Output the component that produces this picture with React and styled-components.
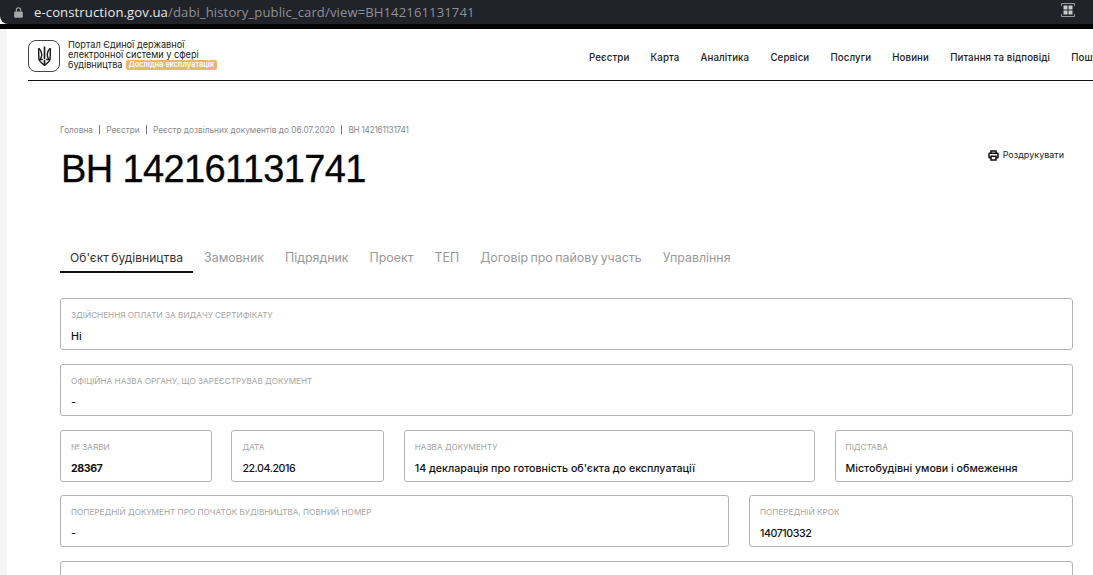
import React from 'react';
import styled, { createGlobalStyle } from 'styled-components';

const GlobalStyle = createGlobalStyle`
  html, body {
    margin: 0;
    padding: 0;
    height: 575px;
    overflow: hidden;
    background: #fff;
    font-family: Inter, "Noto Sans", sans-serif;
  }
  * { box-sizing: border-box; }
`;

const Chrome = styled.div`
  height: 24px;
  background: #202329;
  border-bottom-left-radius: 8px;
  display: flex;
  align-items: center;
  padding: 0 18px 0 14px;
`;

const ChromeShadow = styled.div`
  height: 5px;
  background: #050505;
`;

const Address = styled.div`
  flex: 1;
  margin-left: 11px;
  font-family: "Open Sans", sans-serif;
  font-size: 13.1px;
  color: #8d9196;
  letter-spacing: 0.1px;
  white-space: nowrap;
  b { font-weight: 400; color: #e6e8ea; }
`;

const Page = styled.div`
  margin-left: 7px;
  padding-left: 21px;
  height: 546px;
  overflow: hidden;
  background: #fff;
  box-shadow: -7px 0 0 #f5f5f5;
`;

const Header = styled.header`
  height: 52px;
  border-bottom: 1px solid #111;
  display: flex;
  align-items: flex-start;
  padding-top: 11px;
  white-space: nowrap;
`;

const LogoBox = styled.div`
  width: 32px;
  height: 32px;
  flex-shrink: 0;
  border: 1px solid #444;
  border-radius: 8px;
  display: flex;
  align-items: center;
  justify-content: center;
`;

const Brand = styled.div`
  margin-left: 8px;
  flex-shrink: 0;
  font-size: 9.2px;
  line-height: 10px;
  color: #222;
`;

const Badge = styled.span`
  display: inline-block;
  margin-left: 3px;
  padding: 0 3px;
  height: 10px;
  background: #eeb65f;
  border-radius: 2px;
  color: #fff;
  font-size: 7.4px;
  font-weight: 600;
  line-height: 10px;
  vertical-align: top;
`;

const Nav = styled.nav`
  margin-left: 372px;
  flex-shrink: 0;
  padding-top: 12px;
  display: flex;
  gap: 21.2px;
  font-size: 9.7px;
  line-height: 12px;
  color: #222;
  letter-spacing: 0.1px;
  font-weight: 500;
`;

const Main = styled.main`
  padding: 0 20px 0 32px;
`;

const Crumbs = styled.div`
  margin-top: 43px;
  display: flex;
  align-items: center;
  height: 11px;
  font-size: 8.25px;
  color: #8a8a8a;
  white-space: nowrap;
`;

const Crumb = styled.span`
  letter-spacing: ${({ $code }) => ($code ? '-0.25px' : '0')};
`;

const CrumbSep = styled.span`
  width: 1px;
  height: 9px;
  background: #777;
  margin: 0 6.2px;
`;

const TitleRow = styled.div`
  display: flex;
  justify-content: space-between;
  align-items: flex-start;
`;

const Title = styled.h1`
  margin: 11px 0 0 1px;
  font-size: 38px;
  line-height: 46px;
  font-weight: 400;
  color: #050505;
  font-family: "Liberation Sans", Arial, sans-serif;
  letter-spacing: -0.62px;
  -webkit-text-stroke: 0.3px #050505;
`;

const PrintButton = styled.div`
  margin: 14px 9px 0 0;
  display: flex;
  align-items: center;
  gap: 4px;
  font-size: 9px;
  line-height: 12px;
  color: #222;
  font-weight: 400;
`;

const Tabs = styled.div`
  margin-top: 51px;
  display: flex;
  gap: 1px;
  white-space: nowrap;
`;

const Tab = styled.div`
  padding: 0 10px;
  height: 30px;
  font-size: ${({ $active }) => ($active ? '12.1px' : '12.4px')};
  line-height: 29px;
  word-spacing: -1px;
  color: ${({ $active }) => ($active ? '#333' : '#999')};
  border-bottom: 2px solid ${({ $active }) => ($active ? '#111' : 'transparent')};
`;

const Fields = styled.div`
  margin-top: 25px;
  display: flex;
  flex-direction: column;
  gap: 14px;
`;

const Row = styled.div`
  display: grid;
  grid-template-columns: ${({ $cols }) => $cols || '1fr'};
  column-gap: ${({ $gap }) => $gap || '20px'};
  margin-top: ${({ $tight }) => ($tight ? '-1px' : '0')};
`;

const Field = styled.div`
  height: 52px;
  border: 1px solid #b4b4b4;
  border-radius: 3px;
  padding: 11px 10px 0;
  min-width: 0;
`;

const Label = styled.div`
  font-size: 8.2px;
  line-height: 10px;
  color: #a5a5a5;
  white-space: nowrap;
`;

const Value = styled.div`
  margin-top: 10px;
  font-size: 10.65px;
  line-height: 13px;
  color: #111;
  font-weight: ${({ $bold }) => ($bold ? 700 : 500)};
  letter-spacing: ${({ $numeric }) => ($numeric ? '-0.45px' : '0')};
  white-space: nowrap;
`;

const Trident = () => (
  <svg width="15" height="25" viewBox="0 0 18 26" fill="none" stroke="#1b1b1b" strokeWidth="1.7">
    <path d="M9 1v15" strokeWidth="2" />
    <path d="M2 3c0 5 0 11 .5 13.5H7" />
    <path d="M16 3c0 5 0 11-.5 13.5H11" />
    <path d="M2 3c2 2 4 5 3.6 9-.2 2-1.2 3-1.6 4.5" />
    <path d="M16 3c-2 2-4 5-3.6 9 .2 2 1.2 3 1.6 4.5" />
    <path d="M2.500 16.500c.6 3 3 4.400 6.500 7 3.500-2.600 5.900-4 6.500-7" />
    <path d="M9 17v7" strokeWidth="2" />
  </svg>
);

const PrinterIcon = () => (
  <svg width="11" height="11" viewBox="0 0 11 11" fill="none" stroke="#111" strokeWidth="1.5">
    <path d="M3 3V1h5v2" />
    <rect x="1" y="3.200" width="9" height="4.600" rx="0.5" />
    <path d="M3 6.200h5V10H3z" fill="#fff" />
  </svg>
);

const LockIcon = () => (
  <svg width="9" height="11" viewBox="0 0 9 11" fill="#a6a8ab">
    <path d="M1 4.500h7a.8.8 0 0 1 .8.8v4.600a.8.8 0 0 1-.8.8H1a.8.8 0 0 1-.8-.8V5.300a.8.8 0 0 1 .8-.8z" />
    <path d="M2.300 4.500V3a2.200 2.200 0 0 1 4.400 0v1.500" fill="none" stroke="#a6a8ab" strokeWidth="1.100" />
  </svg>
);

const QrWrap = styled.div`
  display: flex;
  margin-bottom: 4px;
`;

const QrIcon = () => (
  <QrWrap>
    <svg width="14" height="14" viewBox="0 0 14 14" fill="none">
      <path d="M.5 3V.5H13.500V3M.5 11v2.500h13V11" stroke="#b9bbbe" strokeWidth="0.8" />
      <path d="M2.500 2.500h4v4h-4zM7.500 2.500h4v4h-4zM2.500 7.500h4v4h-4zM7.500 7.500h4v4h-4z" fill="#c9cbce" />
    </svg>
  </QrWrap>
);

const navItems = ['Реєстри', 'Карта', 'Аналітика', 'Сервіси', 'Послуги', 'Новини', 'Питання та відповіді', 'Пошук'];
const crumbs = ['Головна', 'Реєстри', 'Реєстр дозвільних документів до 06.07.2020', 'ВН 142161131741'];
const tabs = ['Об\'єкт будівництва', 'Замовник', 'Підрядник', 'Проект', 'ТЕП', 'Договір про пайову участь', 'Управління'];

const rows = [
  {
    fields: [{ label: 'Здійснення оплати за видачу сертифікату'.toUpperCase(), value: 'Ні' }],
  },
  {
    fields: [{ label: 'Офіційна назва органу, що зареєстрував документ'.toUpperCase(), value: '-' }],
  },
  {
    cols: '152px 153px 411.4px 1fr',
    gap: '19.4px',
    fields: [
      { label: '№ ЗАЯВИ', value: '28367', bold: true, numeric: true },
      { label: 'ДАТА', value: '22.04.2016', numeric: true },
      { label: 'НАЗВА ДОКУМЕНТУ', value: '14 декларація про готовність об\'єкта до експлуатації' },
      { label: 'ПІДСТАВА', value: 'Містобудівні умови і обмеження' },
    ],
  },
  {
    cols: '669px 1fr',
    tight: true,
    fields: [
      { label: 'Попередній документ про початок будівництва, повний номер'.toUpperCase(), value: '-' },
      { label: 'ПОПЕРЕДНІЙ КРОК', value: '140710332', numeric: true },
    ],
  },
  {
    fields: [{ label: '', value: '' }],
  },
];

export default function App() {
  return (
    <>
      <GlobalStyle />
      <Chrome>
        <LockIcon />
        <Address><b>e-construction.gov.ua</b>/dabi_history_public_card/view=BH142161131741</Address>
        <QrIcon />
      </Chrome>
      <ChromeShadow />
      <Page>
        <Header>
          <LogoBox><Trident /></LogoBox>
          <Brand>
            Портал Єдиної державної<br />
            електронної системи у сфері<br />
            будівництва<Badge>Дослідна експлуатація</Badge>
          </Brand>
          <Nav>
            {navItems.map((item) => <span key={item}>{item}</span>)}
          </Nav>
        </Header>
        <Main>
          <Crumbs>
            {crumbs.map((item, i) => (
              <React.Fragment key={item}>
                {i > 0 && <CrumbSep />}
                <Crumb $code={i === crumbs.length - 1}>{item}</Crumb>
              </React.Fragment>
            ))}
          </Crumbs>
          <TitleRow>
            <Title>ВН 142161131741</Title>
            <PrintButton><PrinterIcon />Роздрукувати</PrintButton>
          </TitleRow>
          <Tabs>
            {tabs.map((tab, i) => <Tab key={tab} $active={i === 0}>{tab}</Tab>)}
          </Tabs>
          <Fields>
            {rows.map((row, i) => (
              <Row key={i} $cols={row.cols} $gap={row.gap} $tight={row.tight}>
                {row.fields.map((f, j) => (
                  <Field key={j}>
                    <Label>{f.label}</Label>
                    <Value $bold={f.bold} $numeric={f.numeric}>{f.value}</Value>
                  </Field>
                ))}
              </Row>
            ))}
          </Fields>
        </Main>
      </Page>
    </>
  );
}
